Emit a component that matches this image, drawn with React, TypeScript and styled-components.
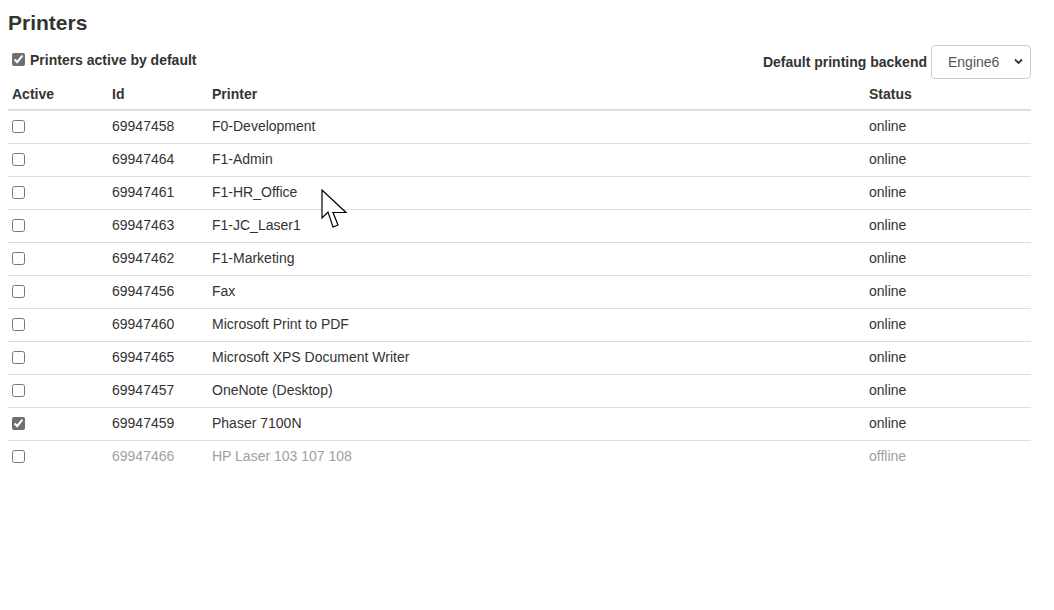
import React from "react";
import styled, { createGlobalStyle } from "styled-components";

const Global = createGlobalStyle`
  html, body { margin: 0; padding: 0; background: #fff; }
  body {
    font-family: "Liberation Sans", Arial, Helvetica, sans-serif;
    font-size: 14px;
    line-height: 20px;
    color: #333;
  }
  * { box-sizing: border-box; }
`;

const Page = styled.div`
  position: relative;
  padding: 8px 23px 0 8px;
  width: 1054px;
  height: 610px;
`;

const Title = styled.h2`
  margin: 2px 0 0 0;
  font-size: 21px;
  line-height: 25px;
  font-weight: bold;
  color: #333;
`;

const Toolbar = styled.div`
  display: flex;
  align-items: center;
  justify-content: space-between;
  margin-top: 10px;
  height: 34px;
`;

const CheckLabel = styled.label`
  display: flex;
  align-items: center;
  gap: 5px;
  padding-left: 4px;
  font-weight: bold;
  margin-top: -5px;
`;

const Check = styled.input.attrs({ type: "checkbox" })`
  width: 13px;
  height: 13px;
  margin: 0;
  accent-color: #6f6f6f;
`;

const BackendGroup = styled.div`
  display: flex;
  align-items: center;
  gap: 4px;
  font-weight: bold;
`;

const SelectWrap = styled.div`
  position: relative;
  width: 100px;
  height: 34px;
`;

const Select = styled.select`
  appearance: none;
  width: 100%;
  height: 100%;
  border: 1px solid #ccc;
  border-radius: 4px;
  background: #fff;
  color: #555;
  font-family: inherit;
  font-size: 14px;
  padding: 0 0 0 16px;
`;

const Chevron = styled.svg`
  position: absolute;
  right: 8px;
  top: 13px;
  pointer-events: none;
`;

const Table = styled.table`
  width: 100%;
  border-collapse: collapse;
`;

const Th = styled.th<{ $w?: number }>`
  text-align: left;
  font-weight: bold;
  padding: 5px 4px 5px 4px;
  line-height: 20px;
  border-bottom: 2px solid #ddd;
  width: ${(p) => (p.$w ? `${p.$w}px` : "auto")};
`;

const Tr = styled.tr<{ $offline?: boolean }>`
  color: ${(p) => (p.$offline ? "#a0a0a0" : "#333")};
`;

const Td = styled.td`
  padding: 5px 4px 7px 4px;
  line-height: 20px;
  border-top: 1px solid #ddd;
  vertical-align: middle;
`;

const RowCheck = styled(Check)`
  display: block;
`;

const Cursor = styled.svg`
  position: absolute;
  left: 321px;
  top: 189px;
`;

type Printer = { id: string; name: string; status: string; active?: boolean };

const printers: Printer[] = [
  { id: "69947458", name: "F0-Development", status: "online" },
  { id: "69947464", name: "F1-Admin", status: "online" },
  { id: "69947461", name: "F1-HR_Office", status: "online" },
  { id: "69947463", name: "F1-JC_Laser1", status: "online" },
  { id: "69947462", name: "F1-Marketing", status: "online" },
  { id: "69947456", name: "Fax", status: "online" },
  { id: "69947460", name: "Microsoft Print to PDF", status: "online" },
  { id: "69947465", name: "Microsoft XPS Document Writer", status: "online" },
  { id: "69947457", name: "OneNote (Desktop)", status: "online" },
  { id: "69947459", name: "Phaser 7100N", status: "online", active: true },
  { id: "69947466", name: "HP Laser 103 107 108", status: "offline" },
];

export default function App() {
  return (
    <>
      <Global />
      <Page>
        <Title>Printers</Title>
        <Toolbar>
          <CheckLabel>
            <Check defaultChecked />
            Printers active by default
          </CheckLabel>
          <BackendGroup>
            Default printing backend
            <SelectWrap>
              <Select defaultValue="Engine6">
                <option>Engine6</option>
              </Select>
              <Chevron width="9" height="7" viewBox="0 0 9 7">
                <path d="M1 1.5 L4.5 5 L8 1.5" fill="none" stroke="#333" strokeWidth="1.8" />
              </Chevron>
            </SelectWrap>
          </BackendGroup>
        </Toolbar>
        <Table>
          <thead>
            <tr>
              <Th $w={100}>Active</Th>
              <Th $w={100}>Id</Th>
              <Th>Printer</Th>
              <Th $w={166}>Status</Th>
            </tr>
          </thead>
          <tbody>
            {printers.map((p) => (
              <Tr key={p.id} $offline={p.status === "offline"}>
                <Td>
                  <RowCheck defaultChecked={!!p.active} />
                </Td>
                <Td>{p.id}</Td>
                <Td>{p.name}</Td>
                <Td>{p.status}</Td>
              </Tr>
            ))}
          </tbody>
        </Table>
        <Cursor width="26" height="40" viewBox="0 0 26 40">
          <path
            d="M1 1 L1 29 L7 23 L12 38 L17 36 L12 23.5 L25 23.5 Z"
            fill="#fff"
            stroke="#000"
            strokeWidth="1.2"
            strokeLinejoin="miter"
          />
        </Cursor>
      </Page>
    </>
  );
}
